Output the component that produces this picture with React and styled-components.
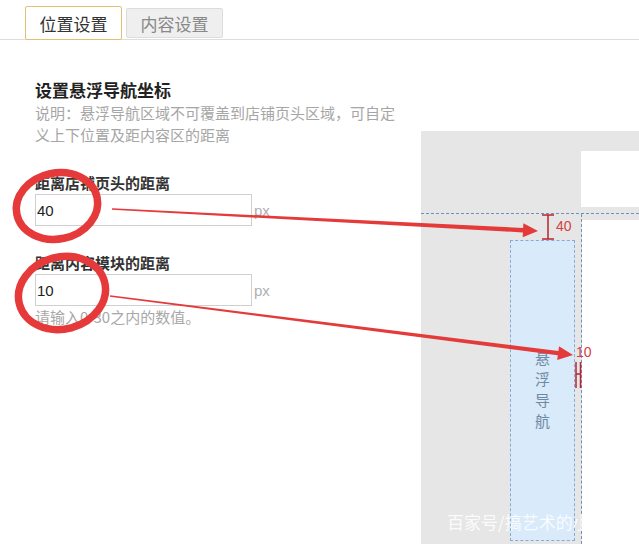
import React from "react"
import styled, { createGlobalStyle } from "styled-components"

const GlobalStyle = createGlobalStyle`
  html, body {
    margin:0;
    padding:0;
    background:#fff;
  }
  body {
    font-family:"Microsoft YaHei", "Noto Sans CJK SC", "Noto Sans", sans-serif;
    overflow:hidden;
  }
  * {
    box-sizing:border-box;
  }
`

const Page = styled.div`
  position:relative;
  width:639px;
  height:544px;
  overflow:hidden;
`

const TabBar = styled.nav`
  display:flex;
  align-items:flex-start;
  gap:4px;
  height:40px;
  padding-left:25px;
  border-bottom:1px solid #ddd;
`

const Tab = styled.div`
  display:flex;
  align-items:center;
  justify-content:center;
  width:97px;
  margin-top:${p => (p.active ? 6 : 8)}px;
  height:${p => (p.active ? 34 : 30)}px;
  border:1px solid ${p => (p.active ? "#e2bf72" : "#dcdcdc")};
  border-radius:2px;
  background:${p => (p.active ? "#fff" : "#efefef")};
  color:${p => (p.active ? "#333" : "#888")};
  font-size:17px;
  position:relative;
  z-index:1;
`

const Main = styled.section`
  display:flex;
  align-items:flex-start;
`

const Form = styled.div`
  width:421px;
  padding:38px 0 0 35px;
`

const Title = styled.h2`
  margin:0;
  font-size:17px;
  line-height:24px;
  font-weight:700;
  color:#222;
`

const Desc = styled.p`
  margin:0;
  width:366px;
  font-size:15px;
  line-height:22px;
  color:#a6a6a6;
`

const Label = styled.div`
  margin-top:26px;
  font-size:15px;
  line-height:22px;
  font-weight:700;
  color:#333;
`

const InputRow = styled.div`
  display:flex;
  align-items:center;
`

const Input = styled.input`
  width:217px;
  height:32px;
  padding:0 0 0 1px;
  border:1px solid #d0d0d0;
  outline:none;
  font-family:"Liberation Sans", Arial, sans-serif;
  font-size:15px;
  color:#222;
`

const Unit = styled.span`
  margin-left:2px;
  font-family:"Liberation Sans", Arial, sans-serif;
  font-size:15px;
  color:#b0b0b0;
`

const Hint = styled.div`
  font-size:15px;
  line-height:22px;
  color:#a8a8a8;
`

const Preview = styled.div`
  position:relative;
  flex:none;
  width:218px;
  height:413px;
  margin-top:91px;
  background:#e6e6e6;
  display:flex;
  flex-direction:column;
`

const ShopHeader = styled.div`
  height:82px;
  padding:20px 0 6px 160px;

  div {
    height:100%;
    background:#fff;
  }
`

const Body = styled.div`
  flex:1;
  display:flex;
  border-top:1px dashed #6f8fbf;
`

const Side = styled.div`
  width:160px;
  padding:26px 0 0 89px;
`

const FloatNav = styled.div`
  width:65px;
  height:301px;
  padding-top:106px;
  background:#d9eafb;
  border:1px dashed #8aaad0;
  display:flex;
  flex-direction:column;
  align-items:center;
  font-size:15px;
  line-height:21px;
  color:#6f89a3;
`

const Content = styled.div`
  flex:1;
  border-left:1px dashed #6f8fbf;
  padding-top:6px;

  div {
    height:100%;
    background:#fff;
  }
`

const Measure = styled.div`
  position:absolute;
  left:${p => p.x}px;
  top:${p => p.y}px;
  font-family:"Liberation Sans", Arial, sans-serif;
  font-size:14px;
  line-height:16px;
  color:#d2403f;
`

const Overlay = styled.svg`
  position:absolute;
  left:0;
  top:0;
  pointer-events:none;
`

const Watermark = styled.div`
  position:absolute;
  left:447px;
  top:511px;
  font-size:17px;
  line-height:22px;
  color:rgba(255,255,255,0.85);
  white-space:nowrap;
`

// tapered arrow polygon from start to tip
const arrowPoints = (x1, y1, x2, y2) => {
  const dx = x2 - x1
  const dy = y2 - y1
  const len = Math.hypot(dx, dy)
  const ux = dx / len
  const uy = dy / len
  const nx = -uy
  const ny = ux
  const head = 15
  const bx = x2 - ux * head
  const by = y2 - uy * head
  const pts = [
    [x1 + nx * 0.7, y1 + ny * 0.7],
    [bx + nx * 2.2, by + ny * 2.2],
    [bx + nx * 7, by + ny * 7],
    [x2, y2],
    [bx - nx * 7, by - ny * 7],
    [bx - nx * 2.2, by - ny * 2.2],
    [x1 - nx * 0.7, y1 - ny * 0.7],
  ]
  return pts.map(p => p.map(v => v.toFixed(1)).join(",")).join(" ")
}

const App = () => (
  <Page>
    <GlobalStyle />
    <TabBar>
      <Tab active>位置设置</Tab>
      <Tab>内容设置</Tab>
    </TabBar>
    <Main>
      <Form>
        <Title>设置悬浮导航坐标</Title>
        <Desc>说明：悬浮导航区域不可覆盖到店铺页头区域，可自定义上下位置及距内容区的距离</Desc>
        <Label>距离店铺页头的距离</Label>
        <InputRow>
          <Input defaultValue="40" />
          <Unit>px</Unit>
        </InputRow>
        <Label>距离内容模块的距离</Label>
        <InputRow>
          <Input defaultValue="10" />
          <Unit>px</Unit>
        </InputRow>
        <Hint>请输入0-30之内的数值。</Hint>
      </Form>
      <Preview>
        <ShopHeader><div /></ShopHeader>
        <Body>
          <Side>
            <FloatNav>
              <span>悬</span>
              <span>浮</span>
              <span>导</span>
              <span>航</span>
            </FloatNav>
          </Side>
          <Content><div /></Content>
        </Body>
        <Measure x={135} y={87}>40</Measure>
        <Measure x={155} y={213}>10</Measure>
      </Preview>
    </Main>
    <Overlay width="639" height="544" viewBox="0 0 639 544">
      <g stroke="#b8232e" strokeWidth="1.5" fill="none">
        <line x1="548" y1="215" x2="548" y2="239" />
        <line x1="542" y1="215" x2="554" y2="215" />
        <line x1="542" y1="239" x2="554" y2="239" />
        <line x1="576" y1="362" x2="576" y2="388" />
        <line x1="580.5" y1="362" x2="580.5" y2="388" />
        <line x1="576" y1="374" x2="580.5" y2="374" />
      </g>
      <g fill="none" stroke="#e6393a" strokeWidth="7.5">
        <ellipse cx="57" cy="206" rx="41" ry="33" transform="rotate(-12 57 206)" />
        <ellipse cx="62" cy="293" rx="44" ry="36" transform="rotate(-15 62 293)" />
      </g>
      <g fill="#e43a3a">
        <polygon points={arrowPoints(112, 209, 538, 231)} />
        <polygon points={arrowPoints(110, 296, 573, 355)} />
      </g>
    </Overlay>
    <Watermark>百家号/搞艺术的小白</Watermark>
  </Page>
)

export default App
